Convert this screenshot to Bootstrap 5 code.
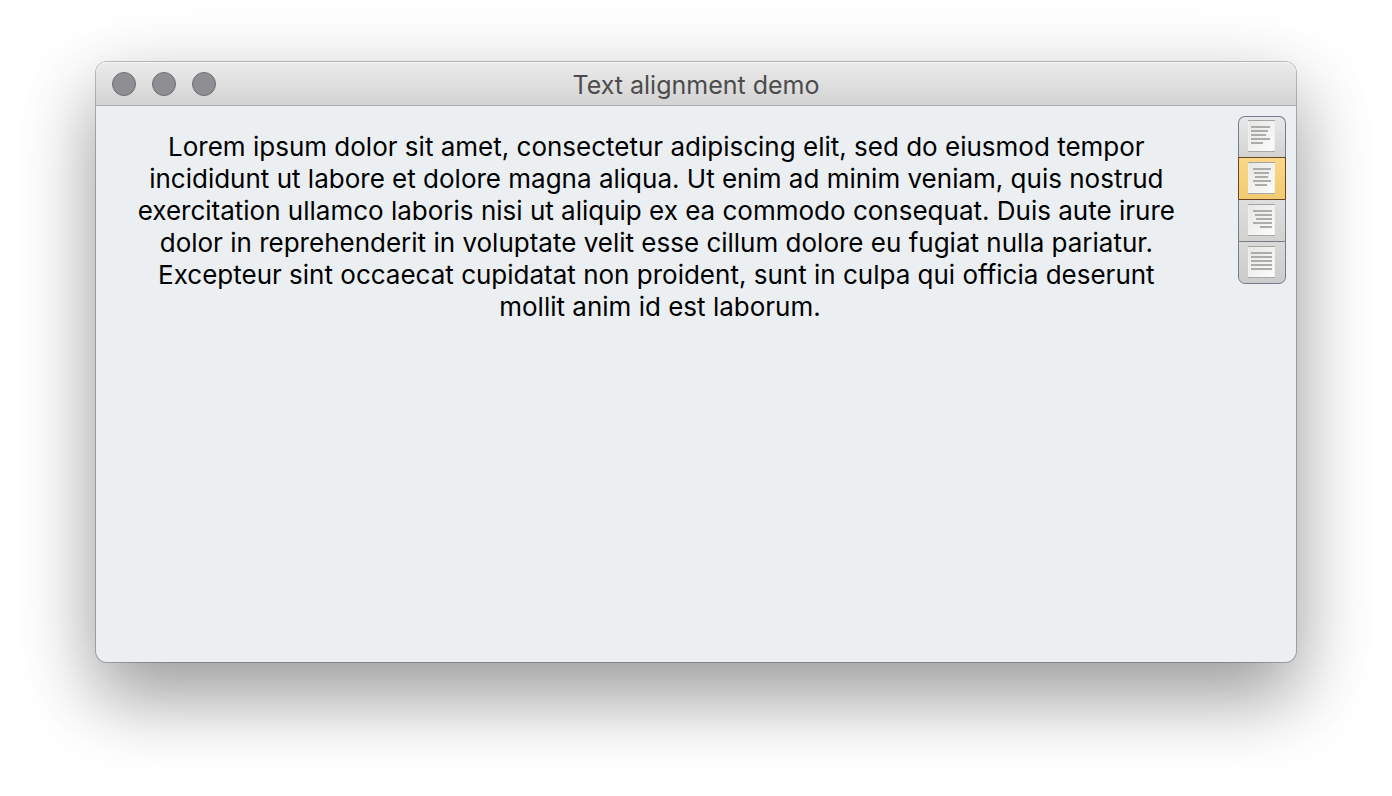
<!DOCTYPE html>
<html lang="en">
<head>
<meta charset="utf-8">
<meta name="viewport" content="width=device-width, initial-scale=1">
<title>Text alignment demo</title>
<link href="https://cdn.jsdelivr.net/npm/bootstrap@5.3.0/dist/css/bootstrap.min.css" rel="stylesheet">
<style>
body { background: #fff; font-family: Inter, "Liberation Sans", sans-serif; }
.desktop { padding: 62px 96px 134px; }
.app-window {
  background: #ebeff2; border-radius: 11px;
  box-shadow: 0 0 0 1px rgba(0,0,0,.24), 0 38px 72px rgba(0,0,0,.3), 0 18px 84px rgba(0,0,0,.14);
}
.title-bar {
  height: 44px; padding: 0 16px;
  background: linear-gradient(#ebebeb, #d3d3d3);
  border-bottom: 1px solid #b0b1b2;
  box-shadow: inset 0 1px #f5f5f5;
  border-radius: 11px 11px 0 0;
}
.side { flex: 1 1 0; }
.light { width: 24px; height: 24px; padding: 0; border: 1px solid #717174; border-radius: 50%; background: #8f8e93; }
.window-title { font-size: 25px; line-height: 32px; color: #4c4c4c; margin: 2px 0 0; font-weight: 400; }
.copy {
  padding: 25px 38px 25px 34px; font-size: 26px; line-height: 32px; color: #000;
  white-space: break-spaces; margin: 0;
}
.rail { padding: 10px; }
.align-group { border-radius: 7px; }
.align-group > .btn {
  flex: none; width: 48px; height: 42px; padding: 4px 0 0; border: 1px solid #777a8c; border-bottom-width: 0;
  background: linear-gradient(#dedede, #d2d2cf);
  display: flex; justify-content: center; align-items: flex-start; margin: 0 !important;
}
.align-group > .btn.first { height: 41px; padding-top: 3px; border-radius: 7px 7px 0 0 !important; background: linear-gradient(#e6e9eb, #d3d3d0); }
.align-group > .btn.last { border-radius: 0 0 7px 7px !important; height: 43px; border-bottom-width: 1px; background: linear-gradient(#d9d9d7, #cbcbcb); }
.align-group > .btn-check:checked + .btn { background: linear-gradient(#f9d888, #f2cb70); border-color: #6d4028; }
.align-group > .btn-check:checked + .btn + .btn-check + .btn { border-top-color: #6d4028; }
</style>
</head>
<body>
<svg width="0" height="0" class="position-absolute" aria-hidden="true">
  <defs>
    <linearGradient id="paper" x1="0" y1="0" x2="1" y2="1"><stop offset="0" stop-color="#e6e6e4"/><stop offset="1" stop-color="#fcfcfc"/></linearGradient>
    <g id="sheet">
      <path d="M1 31.500H28" stroke="#a9a9a7"/>
      <rect x="1" y="0" width="27" height="31" fill="url(#paper)"/>
      <path d="M1 .5H28" stroke="#a3a3a0"/>
      <path d="M1.500 1V31M27.500 1V31" stroke="#f0f0ee"/>
    </g>
  </defs>
</svg>
<main class="desktop d-flex min-vh-100">
  <section class="app-window d-flex flex-column flex-grow-1">
    <header class="title-bar d-flex align-items-center">
      <div class="side d-flex gap-3">
        <button class="light" type="button" aria-label="Close"></button>
        <button class="light" type="button" aria-label="Minimize"></button>
        <button class="light" type="button" aria-label="Zoom"></button>
      </div>
      <h1 class="window-title">Text alignment demo</h1>
      <div class="side"></div>
    </header>
    <div class="d-flex flex-grow-1 align-items-start">
      <p class="copy flex-grow-1 text-center">Lorem ipsum dolor sit amet, consectetur adipiscing elit, sed do eiusmod tempor incididunt ut labore et dolore magna aliqua. Ut enim ad minim veniam, quis nostrud exercitation ullamco laboris nisi ut aliquip ex ea commodo consequat. Duis aute irure dolor in reprehenderit in voluptate velit esse cillum dolore eu fugiat nulla pariatur. Excepteur sint occaecat cupidatat non proident, sunt in culpa qui officia deserunt mollit anim id est laborum.</p>
      <div class="rail">
        <div class="align-group btn-group-vertical" role="group" aria-label="Text alignment">
          <input class="btn-check" type="radio" name="align" id="al-left">
          <label class="btn first" for="al-left" aria-label="Left"><svg width="30" height="33"><use href="#sheet"/><path d="M4 7H23M4 11H21M4 15H19M4 19H23M4 23H16" stroke="#acacab" stroke-width="2"/></svg></label>
          <input class="btn-check" type="radio" name="align" id="al-center" checked>
          <label class="btn" for="al-center" aria-label="Center"><svg width="30" height="33"><use href="#sheet"/><path d="M6 7H24M7 11H22M8 15H21M6 19H24M8 23H20" stroke="#acacab" stroke-width="2"/></svg></label>
          <input class="btn-check" type="radio" name="align" id="al-right">
          <label class="btn" for="al-right" aria-label="Right"><svg width="30" height="33"><use href="#sheet"/><path d="M6 7H25M8 11H25M9 15H25M6 19H25M13 23H25" stroke="#acacab" stroke-width="2"/></svg></label>
          <input class="btn-check" type="radio" name="align" id="al-justify">
          <label class="btn last" for="al-justify" aria-label="Justify"><svg width="30" height="33"><use href="#sheet"/><path d="M4 7H25M4 11H25M4 15H25M4 19H25M4 23H25" stroke="#acacab" stroke-width="2"/></svg></label>
        </div>
      </div>
    </div>
  </section>
</main>
<script src="https://cdn.jsdelivr.net/npm/bootstrap@5.3.0/dist/js/bootstrap.bundle.min.js"></script>
</body>
</html>
